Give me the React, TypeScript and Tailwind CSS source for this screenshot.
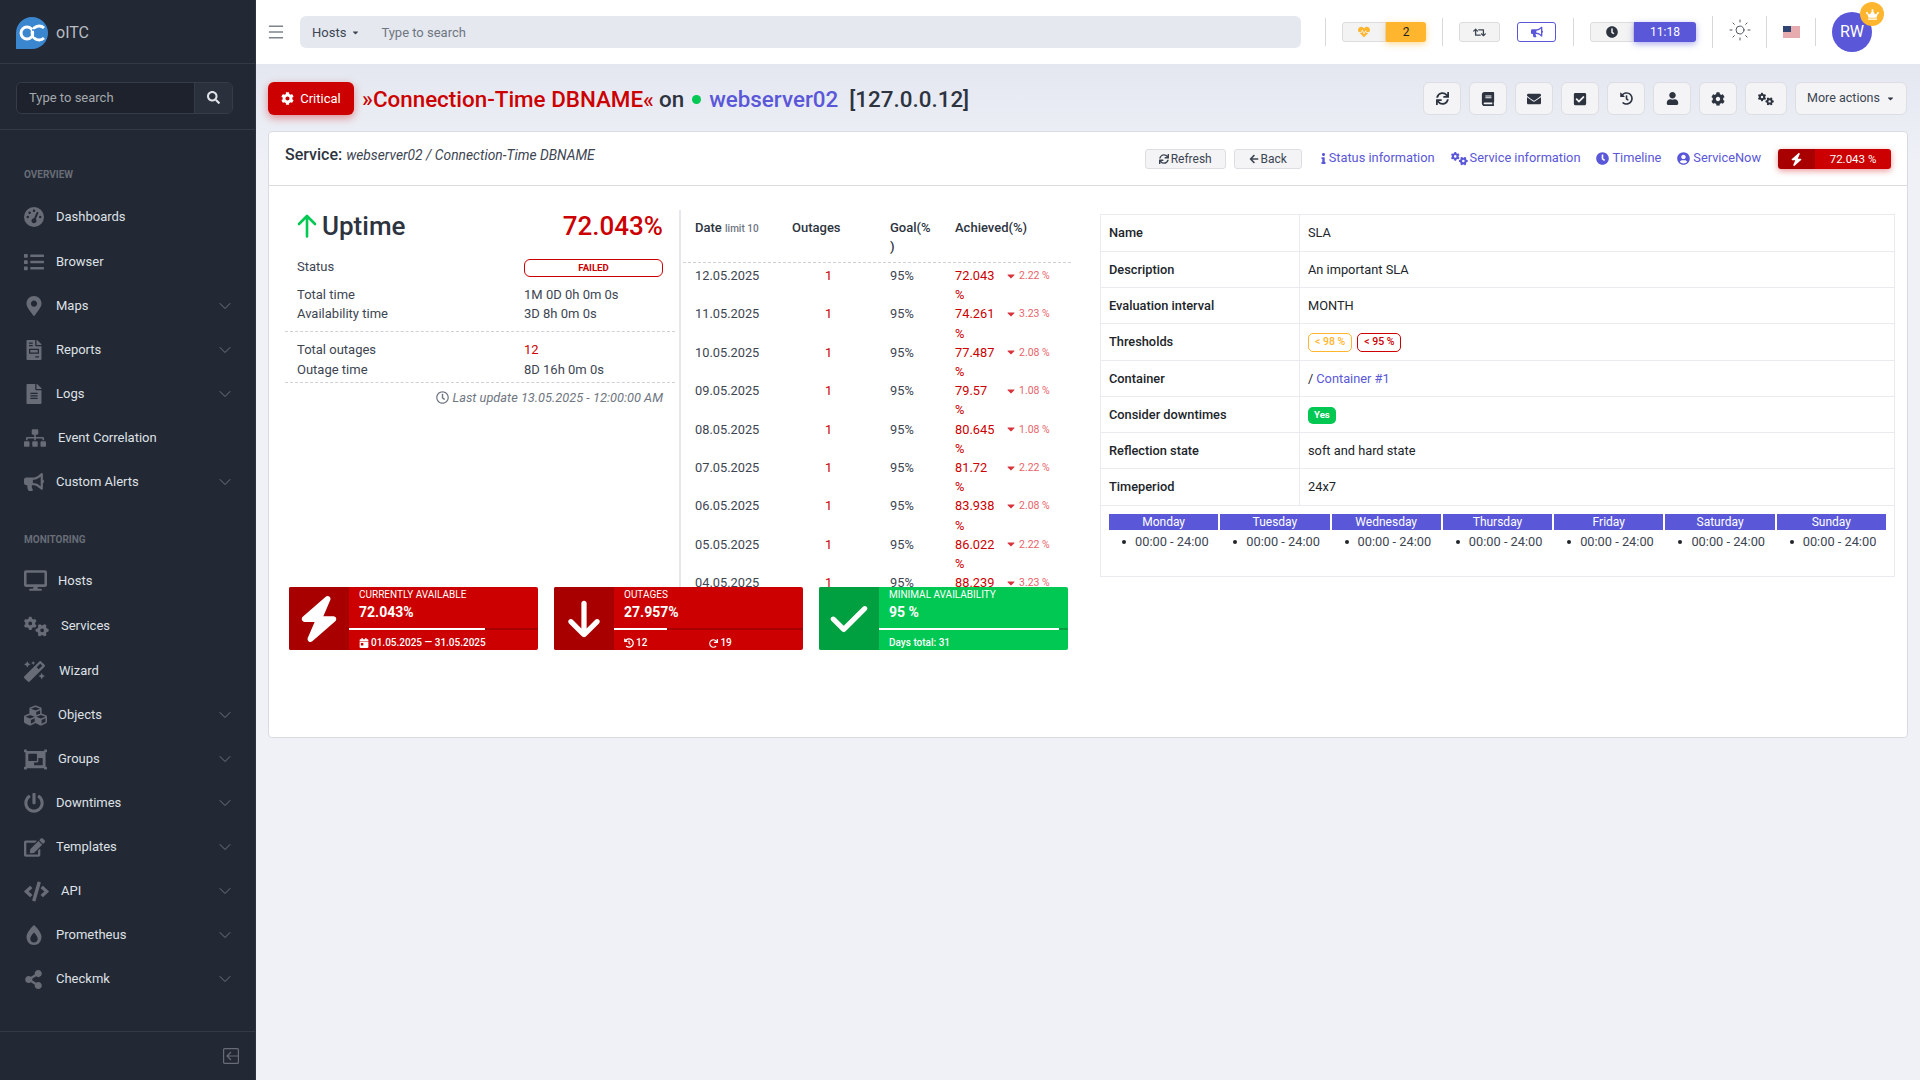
import React from "react";
import {
  FaList, FaMapMarkerAlt, FaFileInvoice, FaFileAlt, FaSitemap, FaBullhorn, FaDesktop, FaMagic,
  FaCubes, FaObjectGroup, FaPowerOff, FaEdit, FaCode, FaBurn, FaShareAlt, FaSearch, FaHeartbeat, FaRetweet, FaClock,
  FaCrown, FaCog, FaSync, FaBook, FaEnvelope, FaCheckSquare, FaHistory, FaUser, FaCaretDown, FaArrowLeft, FaInfo,
  FaUserCircle, FaCalendarDay, FaRedo, FaRegClock,
} from "react-icons/fa";
import { FaGaugeHigh, FaGears, FaBolt, FaArrowDown, FaCheck } from "react-icons/fa6";
import { ChevronDown, Menu, Sun } from "lucide-react";

type NavItem = { icon: React.ReactNode; label: string; gap: string; chev?: boolean; h: string };

const overview: NavItem[] = [
  { icon: <FaGaugeHigh size={20} />, label: "Dashboards", gap: "w-[32px]", h: "h-[46px]" },
  { icon: <FaList size={20} />, label: "Browser", gap: "w-[32px]", h: "h-[44px]" },
  { icon: <FaMapMarkerAlt size={20} />, label: "Maps", gap: "w-[32px]", chev: true, h: "h-[44px]" },
  { icon: <FaFileInvoice size={20} />, label: "Reports", gap: "w-[32px]", chev: true, h: "h-[44px]" },
  { icon: <FaFileAlt size={20} />, label: "Logs", gap: "w-[32px]", chev: true, h: "h-[44px]" },
  { icon: <FaSitemap size={22} />, label: "Event Correlation", gap: "w-[34px]", h: "h-[44px]" },
  { icon: <FaBullhorn size={20} />, label: "Custom Alerts", gap: "w-[32px]", chev: true, h: "h-[44px]" },
];
const monitoring: NavItem[] = [
  { icon: <FaDesktop size={23} />, label: "Hosts", gap: "w-[34px]", h: "h-[45px]" },
  { icon: <FaGears size={25} />, label: "Services", gap: "w-[37px]", h: "h-[46px]" },
  { icon: <FaMagic size={21} />, label: "Wizard", gap: "w-[35px]", h: "h-[44px]" },
  { icon: <FaCubes size={23} />, label: "Objects", gap: "w-[34px]", chev: true, h: "h-[44px]" },
  { icon: <FaObjectGroup size={23} />, label: "Groups", gap: "w-[34px]", chev: true, h: "h-[44px]" },
  { icon: <FaPowerOff size={20} />, label: "Downtimes", gap: "w-[32px]", chev: true, h: "h-[44px]" },
  { icon: <FaEdit size={21} />, label: "Templates", gap: "w-[32px]", chev: true, h: "h-[44px]" },
  { icon: <FaCode size={25} />, label: "API", gap: "w-[37px]", chev: true, h: "h-[44px]" },
  { icon: <FaBurn size={20} />, label: "Prometheus", gap: "w-[32px]", chev: true, h: "h-[44px]" },
  { icon: <FaShareAlt size={19} />, label: "Checkmk", gap: "w-[32px]", chev: true, h: "h-[44px]" },
];

function Nav({ item }: { item: NavItem }) {
  return (
    <div className={`flex items-center pl-[24px] pr-[20px] ${item.h}`}>
      <span className={`${item.gap} shrink-0 text-[#676c76] flex items-center justify-start`}>{item.icon}</span>
      <span className="text-[13px] text-[#dfe1e6] flex-1">{item.label}</span>
      {item.chev && <ChevronDown size={20} strokeWidth={0.9} className="text-[#8a8e96]" />}
    </div>
  );
}

function Logo() {
  return (
    <svg width="32" height="32" viewBox="0 0 32 32">
      <path d="M0 32V16A16 16 0 1 1 16 32Z" fill="#3a87d0" />
      <circle cx="11" cy="16" r="6" fill="none" stroke="#fff" strokeWidth="3" />
      <path d="M28 11A7 7 0 1 0 28 21" fill="none" stroke="#fff" strokeWidth="3" />
      <path d="M16 13h6M19 13v7" stroke="#3a87d0" strokeWidth="1.5" />
    </svg>
  );
}

function Sidebar() {
  return (
    <aside className="w-[256px] h-[1080px] shrink-0 bg-[#222834] flex flex-col border-r border-[#2c3240]">
      <div className="h-[64px] flex items-center pl-[16px] gap-[8px] border-b border-[#333a47] pt-[3px]">
        <Logo />
        <span className="text-[16px] text-[#b9bcc2]">oITC</span>
      </div>
      <div className="h-[66px] flex items-center pl-[16px] pr-[22px] pt-[2px] border-b border-[#333a47]">
        <div className="flex w-full h-[32px] rounded-[6px] border border-[#363c4a] overflow-hidden">
          <div className="w-[178px] bg-[#1d222c] text-[13px] text-[#a4a7ad] pl-[12px] flex items-center border-r border-[#363c4a]">Type to search</div>
          <div className="flex-1 bg-[#2a303c] flex items-center justify-center text-[#dfe1e6]"><FaSearch size={13} /></div>
        </div>
      </div>
      <div className="text-[10px] font-bold text-[#686d77] pl-[24px] pt-[39px] leading-[12px] mb-[13px]">OVERVIEW</div>
      <div className="flex flex-col">
        {overview.map((i) => <Nav key={i.label} item={i} />)}
      </div>
      <div className="text-[10px] font-bold text-[#686d77] pl-[24px] pt-[30px] leading-[12px] mb-[12px]">MONITORING</div>
      <div className="flex flex-col">
        {monitoring.map((i) => <Nav key={i.label} item={i} />)}
      </div>
      <div className="mt-auto h-[49px] border-t border-[#333a47] flex items-center justify-end pr-[16px]">
        <svg width="16" height="16" viewBox="0 0 16 16" fill="none" stroke="#676c76" strokeWidth="1.2">
          <rect x="0.6" y="0.6" width="14.8" height="14.8" rx="1" />
          <path d="M15 8H4M8 4L4 8l4 4" />
        </svg>
      </div>
    </aside>
  );
}

function Divider({ h = "h-[28px]" }: { h?: string }) {
  return <div className={`w-px ${h} bg-[#d6d8dc]`} />;
}

function Topbar() {
  return (
    <header className="h-[64px] bg-white flex items-center shrink-0">
      <Menu size={20} strokeWidth={1.2} className="ml-[10px] text-[#3d4552]" />
      <div className="ml-[14px] w-[1001px] h-[32px] rounded-[6px] bg-[#e5e8ef] flex items-center text-[13px] pt-[1px]">
        <span className="pl-[12px] text-[#3d4552]">Hosts</span>
        <FaCaretDown size={9} className="ml-[5px] text-[#3d4552]" />
        <span className="ml-[21px] text-[#6f7682]">Type to search</span>
      </div>
      <div className="ml-[24px]"><Divider /></div>
      <div className="ml-[16px] flex h-[20px] w-[84px] rounded-[3px]">
        <div className="w-[44px] bg-[#f3f3f3] border border-[#dcdcdc] rounded-l-[3px] flex items-center justify-center text-[#ffb52e]"><FaHeartbeat size={12} /></div>
        <div className="flex-1 bg-[#ffb52e] rounded-r-[3px] shadow-[0_2px_6px_rgba(255,181,46,0.5)] flex items-center justify-center text-[12px] text-[#222]">2</div>
      </div>
      <div className="ml-[16px]"><Divider /></div>
      <div className="ml-[16px] w-[41px] h-[20px] rounded-[3px] bg-[#f3f3f3] border border-[#dcdcdc] flex items-center justify-center text-[#3d4552]"><FaRetweet size={13} /></div>
      <div className="ml-[17px] w-[39px] h-[20px] rounded-[3px] border border-[#5a57d9] flex items-center justify-center text-[#5a57d9]"><FaBullhorn size={12} /></div>
      <div className="ml-[17px]"><Divider /></div>
      <div className="ml-[16px] flex h-[20px] w-[106px]">
        <div className="w-[44px] bg-[#f3f3f3] border border-[#dcdcdc] rounded-l-[3px] flex items-center justify-center text-[#2d3440]"><FaClock size={12} /></div>
        <div className="flex-1 bg-[#5a57d9] rounded-r-[3px] shadow-[0_2px_6px_rgba(90,87,217,0.5)] flex items-center justify-center text-[12px] text-white">11:18</div>
      </div>
      <div className="ml-[16px]"><Divider h="h-[32px]" /></div>
      <Sun size={24} strokeWidth={0.9} className="ml-[15px] mb-[4px] text-[#3d4552]" />
      <div className="ml-[14px]"><Divider h="h-[32px]" /></div>
      <svg width="17" height="12" viewBox="0 0 17 12" className="ml-[16px]">
        <rect width="17" height="12" fill="#f4f4f4" />
        <path d="M0 1h17M0 3h17M0 5h17M0 7h17M0 9h17M0 11h17" stroke="#d9636b" strokeWidth="1" />
        <rect width="8" height="6" fill="#2f4470" />
      </svg>
      <div className="ml-[15px]"><Divider /></div>
      <div className="relative ml-[16px] w-[40px] h-[40px] rounded-full bg-[#5a57d9] flex items-center justify-center text-white text-[16px]">
        RW
        <span className="absolute -top-[10px] -right-[12px] w-[24px] h-[24px] rounded-full bg-[#ffb52e] flex items-center justify-center text-white"><FaCrown size={13} /></span>
      </div>
    </header>
  );
}

function ActionBtn({ children, w }: { children: React.ReactNode; w: string }) {
  return (
    <div className={`${w} h-[33px] rounded-[6px] bg-[#f4f4f6] border border-[#dcdee3] flex items-center justify-center text-[#2d3440]`}>{children}</div>
  );
}

function TitleRow() {
  return (
    <div className="flex items-center h-[33px] mt-[18px] pl-[12px]">
      <div className="w-[86px] h-[33px] rounded-[6px] bg-[#cc0000] shadow-[0_3px_8px_rgba(204,0,0,0.4)] text-white flex items-center justify-center gap-[6px] text-[13px]">
        <FaCog size={13} /><span>Critical</span>
      </div>
      <div className="ml-[8px] mt-[2px] text-[22.4px] font-medium leading-[33px] text-[#2d3440] whitespace-nowrap flex items-center">
        <span className="text-[#cc0000]">»Connection-Time DBNAME«</span>
        <span className="ml-[5px]">on</span>
        <span className="ml-[8px] w-[9px] h-[9px] rounded-full bg-[#00c853] inline-block" />
        <span className="ml-[8px] text-[#5a57d9]">webserver02</span>
        <span className="ml-[11px]">[127.0.0.12]</span>
      </div>
      <div className="ml-auto mr-[13px] flex items-center gap-[8px]">
        <ActionBtn w="w-[38px]"><FaSync size={13} /></ActionBtn>
        <ActionBtn w="w-[38px]"><FaBook size={14} /></ActionBtn>
        <ActionBtn w="w-[38px]"><FaEnvelope size={14} /></ActionBtn>
        <ActionBtn w="w-[38px]"><FaCheckSquare size={14} /></ActionBtn>
        <ActionBtn w="w-[38px]"><FaHistory size={13} /></ActionBtn>
        <ActionBtn w="w-[38px]"><FaUser size={13} /></ActionBtn>
        <ActionBtn w="w-[38px]"><FaCog size={14} /></ActionBtn>
        <ActionBtn w="w-[42px]"><FaGears size={16} /></ActionBtn>
        <ActionBtn w="w-[112px]"><span className="text-[12.5px] text-[#3d4552]">More actions</span><FaCaretDown size={9} className="ml-[6px]" /></ActionBtn>
      </div>
    </div>
  );
}

function CardHeader() {
  return (
    <div className="h-[54px] border-b border-[#d9dbe0] flex pl-[16px] pr-[16px] pt-[17px]">
      <div className="text-[13.8px] leading-[14px] text-[#2d3440] mt-[-1px]">
        <span className="text-[16px] font-medium">Service: </span>
        <span className="italic text-[#3d4552]">webserver02 / Connection-Time DBNAME</span>
      </div>
      <div className="ml-auto flex items-start text-[12.8px] text-[#5a57d9] leading-[20px]">
        <div className="w-[81px] h-[20px] rounded-[3px] bg-[#f4f4f6] border border-[#dcdee3] flex items-center justify-center gap-[2px] text-[#3d4552] text-[12px]"><FaSync size={10} />Refresh</div>
        <div className="ml-[8px] w-[68px] h-[20px] rounded-[3px] bg-[#f4f4f6] border border-[#dcdee3] flex items-center justify-center gap-[2px] text-[#3d4552] text-[12px]"><FaArrowLeft size={10} />Back</div>
        <div className="ml-[16px] flex items-center -mt-[1px]"><FaInfo size={11} />Status information</div>
        <div className="ml-[16px] flex items-center gap-[2px] -mt-[1px]"><FaGears size={17} />Service information</div>
        <div className="ml-[16px] flex items-center gap-[3px] -mt-[1px]"><FaClock size={13} />Timeline</div>
        <div className="ml-[16px] flex items-center gap-[3px] -mt-[1px]"><FaUserCircle size={13} />ServiceNow</div>
        <div className="ml-[17px] flex w-[113px] h-[20px] rounded-[3px] overflow-hidden shadow-[0_2px_6px_rgba(204,0,0,0.4)] text-white text-[11.5px]">
          <div className="w-[37px] bg-[#a80000] flex items-center justify-center"><FaBolt size={13} /></div>
          <div className="flex-1 bg-[#cc0000] flex items-center justify-center">72.043 %</div>
        </div>
      </div>
    </div>
  );
}

function Uptime() {
  return (
    <div className="w-[396px] shrink-0 border-r-2 border-[#e6e7ea] text-[13px] text-[#3d4552]">
      <div className="flex items-center h-[32px] pl-[12px] pr-[16px]">
        <svg width="20" height="24" viewBox="0 0 20 24" fill="none" stroke="#00c853" strokeWidth="2.6" strokeLinecap="round" strokeLinejoin="round">
          <path d="M10 22.5V2.5M2 10l8-8 8 8" />
        </svg>
        <span className="ml-[5px] text-[26px] font-medium text-[#2d3440]">Uptime</span>
        <span className="ml-auto text-[26px] font-medium text-[#cc0000]">72.043%</span>
      </div>
      <div className="flex items-center mt-[16px] h-[18px] pl-[12px] pr-[16px]">
        <span className="w-[227px]">Status</span>
        <span className="flex-1 h-[18px] mt-[2px] rounded-[6px] border border-[#cc0000] bg-white text-[#cc0000] text-[9.6px] font-bold flex items-center justify-center">FAILED</span>
      </div>
      <div className="flex items-center mt-[9px] h-[19px] pl-[12px]"><span className="w-[227px]">Total time</span><span>1M 0D 0h 0m 0s</span></div>
      <div className="flex items-center h-[19px] pl-[12px]"><span className="w-[227px]">Availability time</span><span>3D 8h 0m 0s</span></div>
      <div className="border-b border-dashed border-[#cfd1d6] h-[9px] w-[390px]" />
      <div className="flex items-center mt-[8px] h-[20px] pl-[12px]"><span className="w-[227px]">Total outages</span><span className="text-[#cc0000]">12</span></div>
      <div className="flex items-center h-[20px] pl-[12px]"><span className="w-[227px]">Outage time</span><span>8D 16h 0m 0s</span></div>
      <div className="border-b border-dashed border-[#cfd1d6] h-[3px] w-[390px]" />
      <div className="flex items-center justify-end pr-[16px] mt-[5px] h-[19px] text-[12.8px] italic text-[#6f7682] gap-[3px]"><FaRegClock size={13} />Last update 13.05.2025 - 12:00:00 AM</div>
    </div>
  );
}

const rows: [string, string, string][] = [
  ["12.05.2025", "72.043 %", "2.22 %"],
  ["11.05.2025", "74.261 %", "3.23 %"],
  ["10.05.2025", "77.487 %", "2.08 %"],
  ["09.05.2025", "79.57 %", "1.08 %"],
  ["08.05.2025", "80.645 %", "1.08 %"],
  ["07.05.2025", "81.72 %", "2.22 %"],
  ["06.05.2025", "83.938 %", "2.08 %"],
  ["05.05.2025", "86.022 %", "2.22 %"],
  ["04.05.2025", "88.239 %", "3.23 %"],
];

function SlaTable() {
  return (
    <div className="ml-[2px] w-[388px] overflow-hidden text-[12.8px] leading-[19.2px] text-[#3d4552]">
      <div className="flex border-b border-dashed border-[#cfd1d6] pl-[12px] font-medium text-[13px] text-[#2d3440] pt-[8px] pb-[3px] h-[53px]">
        <div className="w-[97px]">Date <span className="text-[10px] text-[#6f7682] font-medium">limit 10</span></div>
        <div className="w-[98px]">Outages</div>
        <div className="w-[65px]">Goal(%<br />)</div>
        <div>Achieved(%)</div>
      </div>
      {rows.map(([d, a, delta]) => (
        <div key={d} className="flex pl-[12px] h-[38.4px] pt-[3px]">
          <div className="w-[97px]">{d}</div>
          <div className="w-[98px] text-[#cc0000] pl-[33px]">1</div>
          <div className="w-[65px]">95%</div>
          <div className="w-[50px] text-[#cc0000]"><span className="inline-block w-[44px]">{a}</span></div>
          <div className="text-[10.5px] text-[#e8636a] flex items-center h-[19.2px] gap-[2px]"><FaCaretDown size={12} className="text-[#d9343c]" />{delta}</div>
        </div>
      ))}
    </div>
  );
}

function Widget({ color, dark, icon, title, value, pct, footer }: { color: string; dark: string; icon: React.ReactNode; title: string; value: string; pct: string; footer: React.ReactNode }) {
  return (
    <div className={`w-[249px] h-[63px] flex rounded-[2px] overflow-hidden text-white ${color}`}>
      <div className={`w-[60px] shrink-0 flex items-center justify-center ${dark}`}>{icon}</div>
      <div className="flex-1 flex flex-col">
        <div className="pl-[10px] text-[10px] leading-[12px] mt-[2px] uppercase">{title}</div>
        <div className="pl-[10px] text-[14px] font-bold leading-[16px] mt-[3px]">{value}</div>
        <div className={`h-[2px] shrink-0 mt-[8px] ${dark}`}><div className={`h-full bg-white ${pct}`} /></div>
        <div className="pl-[10px] text-[10px] font-medium leading-[12px] mt-[7px] flex items-center">{footer}</div>
      </div>
    </div>
  );
}

const details: [string, React.ReactNode][] = [
  ["Name", "SLA"],
  ["Description", "An important SLA"],
  ["Evaluation interval", "MONTH"],
  ["Thresholds", (
    <span className="flex gap-[5px] text-[10.5px] font-medium">
      <span className="h-[19px] px-[6px] rounded-[5px] border border-[#ffb52e] text-[#ffb52e] flex items-center">{"< 98 %"}</span>
      <span className="h-[19px] px-[6px] rounded-[5px] border border-[#cc0000] text-[#cc0000] flex items-center">{"< 95 %"}</span>
    </span>
  )],
  ["Container", <>/ <span className="text-[#5a57d9] ml-[3px]">Container #1</span></>],
  ["Consider downtimes", <span className="h-[17px] mt-[1px] px-[6px] rounded-[5px] bg-[#00c853] text-white text-[9.6px] font-bold flex items-center">Yes</span>],
  ["Reflection state", "soft and hard state"],
  ["Timeperiod", "24x7"],
];
const heights = ["h-[37px]", "h-[36px]", "h-[36px]", "h-[37px]", "h-[36px]", "h-[36px]", "h-[36px]", "h-[37px]"];
const days = ["Monday", "Tuesday", "Wednesday", "Thursday", "Friday", "Saturday", "Sunday"];

function Details() {
  return (
    <div className="ml-[20px] w-[795px] h-[363px] border border-[#e9ebf0] text-[12.8px] text-[#212529]">
      {details.map(([k, v], i) => (
        <div key={k} className={`flex border-b border-[#e9ebf0] ${heights[i]}`}>
          <div className="w-[199px] pl-[8px] font-medium border-r border-[#e9ebf0] flex items-center">{k}</div>
          <div className="pl-[8px] flex items-center">{v}</div>
        </div>
      ))}
      <div className="grid grid-cols-7 gap-x-[2px] px-[8px] pt-[8px]">
        {days.map((d) => (
          <div key={d}>
            <div className="h-[16px] bg-[#5a57d9] text-white text-[12px] text-center leading-[16px]">{d}</div>
            <div className="flex items-center h-[24px] pl-[13px] text-[#3d4552]">
              <span className="w-[4px] h-[4px] rounded-full bg-[#212529] mr-[9px]" />00:00 - 24:00
            </div>
          </div>
        ))}
      </div>
    </div>
  );
}

export default function App() {
  return (
    <div className="flex w-[1920px] h-[1080px] overflow-hidden font-[Roboto,sans-serif] bg-[#eef0f6]">
      <Sidebar />
      <div className="flex-1 flex flex-col min-w-0 bg-[#eff1f7]">
        <Topbar />
        <div className="bg-gradient-to-b from-[#e4e7f0] to-[#eff1f7] h-[100px] -mb-[100px] shrink-0" />
        <div className="relative flex flex-col">
          <TitleRow />
          <div className="ml-[12px] mr-[12px] mt-[16px] h-[607px] bg-white rounded-[4px] border border-[#d9dbe0]">
            <CardHeader />
            <div className="flex pl-[16px]">
              <div className="w-[795px] shrink-0 pt-[24px]">
                <div className="flex h-[377px]">
                  <Uptime />
                  <SlaTable />
                </div>
                <div className="flex gap-[16px] pl-[4px]">
                  <Widget color="bg-[#cc0000]" dark="bg-[#a80000]" icon={<FaBolt size={46} />} title="Currently available" value="72.043%" pct="w-[72%]"
                    footer={<><FaCalendarDay size={10} className="mr-[2px]" />01.05.2025 — 31.05.2025</>} />
                  <Widget color="bg-[#cc0000]" dark="bg-[#a80000]" icon={<FaArrowDown size={42} />} title="Outages" value="27.957%" pct="w-[28%]"
                    footer={<><FaHistory size={10} className="mr-[2px]" />12<FaRedo size={9} className="ml-[62px] mr-[2px]" />19</>} />
                  <Widget color="bg-[#00c853]" dark="bg-[#00a040]" icon={<FaCheck size={42} />} title="Minimal availability" value="95 %" pct="w-[95%]"
                    footer={<>Days total: 31</>} />
                </div>
              </div>
              <div className="pt-[28px]"><Details /></div>
            </div>
          </div>
        </div>
      </div>
    </div>
  );
}
